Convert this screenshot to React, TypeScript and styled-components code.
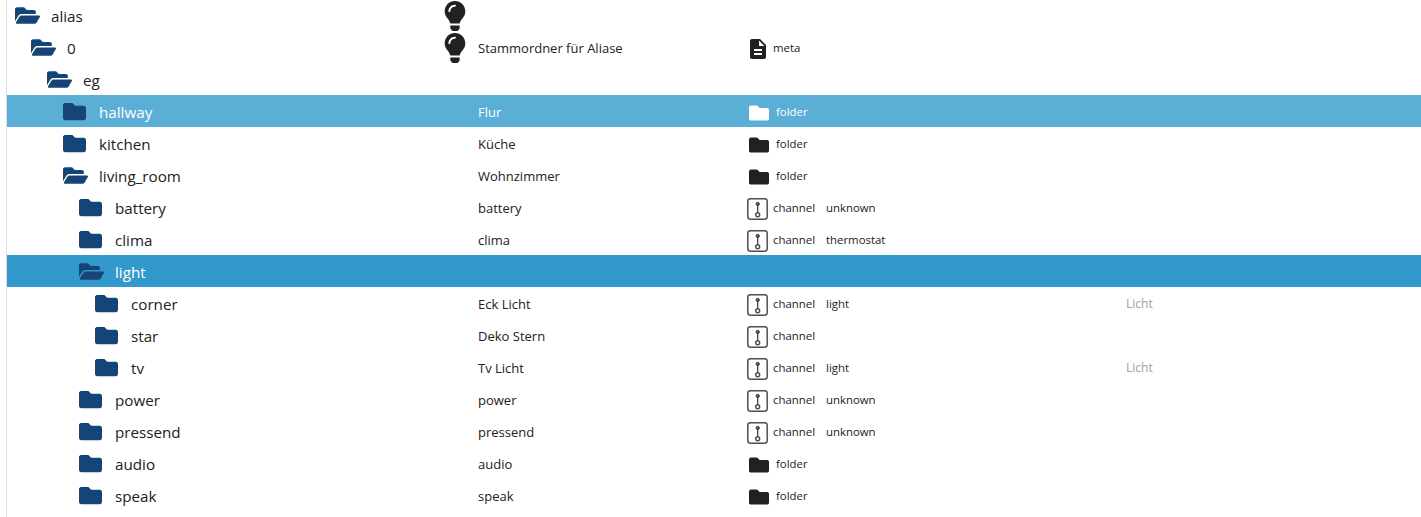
import React from "react";
import styled, { createGlobalStyle } from "styled-components";
import { FaFolder, FaFolderOpen, FaLightbulb } from "react-icons/fa";
import { MdDescription } from "react-icons/md";

type ObjType = "meta" | "folder" | "channel";

interface TreeRow {
  id: string;
  level: number;
  open?: boolean;
  bulb?: boolean;
  name?: string;
  type?: ObjType;
  role?: string;
  room?: string;
  state?: "selected" | "hover";
}

const rows: TreeRow[] = [
  { id: "alias", level: 0, open: true, bulb: true },
  { id: "0", level: 1, open: true, bulb: true, name: "Stammordner für Aliase", type: "meta" },
  { id: "eg", level: 2, open: true },
  { id: "hallway", level: 3, name: "Flur", type: "folder", state: "hover" },
  { id: "kitchen", level: 3, name: "Küche", type: "folder" },
  { id: "living_room", level: 3, open: true, name: "Wohnzimmer", type: "folder" },
  { id: "battery", level: 4, name: "battery", type: "channel", role: "unknown" },
  { id: "clima", level: 4, name: "clima", type: "channel", role: "thermostat" },
  { id: "light", level: 4, open: true, state: "selected" },
  { id: "corner", level: 5, name: "Eck Licht", type: "channel", role: "light", room: "Licht" },
  { id: "star", level: 5, name: "Deko Stern", type: "channel" },
  { id: "tv", level: 5, name: "Tv Licht", type: "channel", role: "light", room: "Licht" },
  { id: "power", level: 4, name: "power", type: "channel", role: "unknown" },
  { id: "pressend", level: 4, name: "pressend", type: "channel", role: "unknown" },
  { id: "audio", level: 4, name: "audio", type: "folder" },
  { id: "speak", level: 4, name: "speak", type: "folder" },
];

const ChannelIcon = () => (
  <svg width="21" height="22" viewBox="0 0 21 22" fill="none" stroke="currentColor">
    <rect x="0.8" y="0.8" width="19.4" height="20.4" rx="2.6" strokeWidth="1.5" />
    <circle cx="10.7" cy="6" r="1.7" fill="currentColor" strokeWidth="1" />
    <path d="M10.7 7.5v7" strokeWidth="1.4" />
    <circle cx="10.7" cy="16.8" r="2" strokeWidth="1.4" />
  </svg>
);

const App: React.FC = () => {
  return (
    <>
      <GlobalStyle />
      <Tree>
        {rows.map((row) => (
          <Row key={row.id} $state={row.state}>
            <NameCell $level={row.level}>
              <FolderSlot $open={row.open}>{row.open ? <FaFolderOpen /> : <FaFolder />}</FolderSlot>
              <IdText>{row.id}</IdText>
            </NameCell>
            <BulbCell>{row.bulb && <FaLightbulb />}</BulbCell>
            <TitleCell>{row.name}</TitleCell>
            <TypeCell>
              {row.type === "meta" && (
                <MetaIcon>
                  <MdDescription />
                </MetaIcon>
              )}
              {row.type === "folder" && (
                <SmallFolder>
                  <FaFolder />
                </SmallFolder>
              )}
              {row.type === "channel" && (
                <ChannelSlot>
                  <ChannelIcon />
                </ChannelSlot>
              )}
              {row.type && <TypeText>{row.type}</TypeText>}
            </TypeCell>
            <RoleCell>{row.role}</RoleCell>
            <RoomCell>{row.room}</RoomCell>
          </Row>
        ))}
      </Tree>
    </>
  );
};

const GlobalStyle = createGlobalStyle`
  html, body {
    margin: 0;
    height: 100%;
    overflow: hidden;
    background: #fff;
  }
  body {
    font-family: "Open Sans", "Noto Sans", sans-serif;
    color: #212121;
  }
`;

const Tree = styled.div`
  margin: -1px 0 0 6px;
  border-left: 1px solid #e0e0e0;
  height: 520px;
`;

const Row = styled.div<{ $state?: "selected" | "hover" }>`
  display: grid;
  grid-template-columns: 433px 38px 270px 78px 300px 1fr;
  height: 32px;
  align-items: center;
  background: ${(p) =>
    p.$state === "selected" ? "#3399cc" : p.$state === "hover" ? "#5baed6" : "transparent"};
  color: ${(p) => (p.$state ? "#fff" : "#212121")};
`;

const NameCell = styled.div<{ $level: number }>`
  display: flex;
  align-items: center;
  padding-left: ${(p) => 8 + p.$level * 16}px;
  min-width: 0;
`;

const FolderSlot = styled.span<{ $open?: boolean }>`
  display: flex;
  width: 36px;
  flex: none;
  color: #164477;
  font-size: ${(p) => (p.$open ? 25 : 23)}px;
`;

const IdText = styled.span`
  font-size: 15.2px;
  padding-top: 1px;
`;

const BulbCell = styled.div`
  display: flex;
  font-size: 30px;
  padding-top: 2px;
  color: #212121;
`;

const TitleCell = styled.div`
  font-size: 13px;
  padding-top: 2px;
`;

const TypeCell = styled.div`
  display: flex;
  align-items: center;
`;

const MetaIcon = styled.span`
  display: flex;
  font-size: 24px;
  margin-left: -2px;
  width: 27px;
  padding-top: 4px;
  color: #212121;
`;

const SmallFolder = styled.span`
  display: flex;
  font-size: 20px;
  margin-left: 1px;
  width: 27px;
  padding-top: 4px;
`;

const ChannelSlot = styled.span`
  display: flex;
  margin-left: -1px;
  width: 26px;
  padding-top: 4px;
  color: #4f4f4f;
`;

const TypeText = styled.span`
  font-size: 11.4px;
`;

const RoleCell = styled.div`
  font-size: 11.4px;
`;

const RoomCell = styled.div`
  font-size: 12px;
  color: #a0a0a0;
`;

export default App;
